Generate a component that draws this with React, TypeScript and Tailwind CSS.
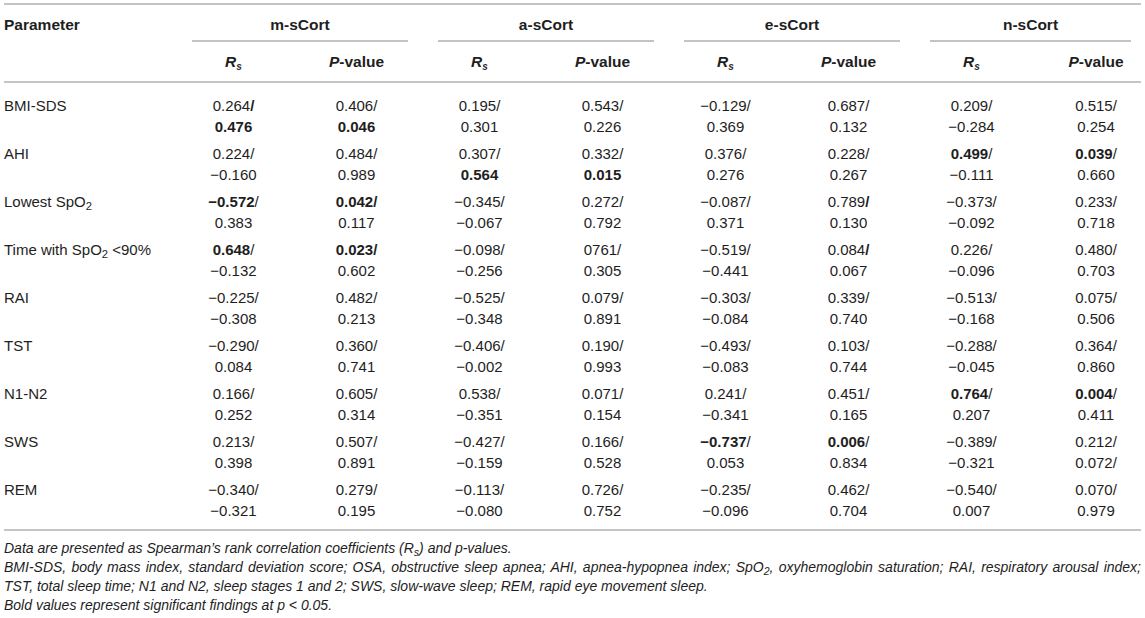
import React from 'react';

// each value: two lines, text between * is bold
type Pair = [string, string];

interface Row {
  label: React.ReactNode;
  cells: Pair[];
}

const SpO2 = () => (
  <>
    SpO<sub>2</sub>
  </>
);

const rows: Row[] = [
  {
    label: 'BMI-SDS',
    cells: [
      ['0.264*/*', '*0.476*'],
      ['0.406/', '*0.046*'],
      ['0.195/', '0.301'],
      ['0.543/', '0.226'],
      ['−0.129/', '0.369'],
      ['0.687/', '0.132'],
      ['0.209/', '−0.284'],
      ['0.515/', '0.254'],
    ],
  },
  {
    label: 'AHI',
    cells: [
      ['0.224/', '−0.160'],
      ['0.484/', '0.989'],
      ['0.307/', '*0.564*'],
      ['0.332/', '*0.015*'],
      ['0.376/', '0.276'],
      ['0.228/', '0.267'],
      ['*0.499*/', '−0.111'],
      ['*0.039*/', '0.660'],
    ],
  },
  {
    label: (
      <>
        Lowest <SpO2 />
      </>
    ),
    cells: [
      ['*−0.572*/', '0.383'],
      ['*0.042/*', '0.117'],
      ['−0.345/', '−0.067'],
      ['0.272/', '0.792'],
      ['−0.087/', '0.371'],
      ['0.789*/*', '0.130'],
      ['−0.373/', '−0.092'],
      ['0.233/', '0.718'],
    ],
  },
  {
    label: (
      <>
        Time with <SpO2 /> &lt;90%
      </>
    ),
    cells: [
      ['*0.648*/', '−0.132'],
      ['*0.023/*', '0.602'],
      ['−0.098/', '−0.256'],
      ['0761/', '0.305'],
      ['−0.519/', '−0.441'],
      ['0.084*/*', '0.067'],
      ['0.226/', '−0.096'],
      ['0.480/', '0.703'],
    ],
  },
  {
    label: 'RAI',
    cells: [
      ['−0.225/', '−0.308'],
      ['0.482/', '0.213'],
      ['−0.525/', '−0.348'],
      ['0.079/', '0.891'],
      ['−0.303/', '−0.084'],
      ['0.339/', '0.740'],
      ['−0.513/', '−0.168'],
      ['0.075/', '0.506'],
    ],
  },
  {
    label: 'TST',
    cells: [
      ['−0.290/', '0.084'],
      ['0.360/', '0.741'],
      ['−0.406/', '−0.002'],
      ['0.190/', '0.993'],
      ['−0.493/', '−0.083'],
      ['0.103/', '0.744'],
      ['−0.288/', '−0.045'],
      ['0.364/', '0.860'],
    ],
  },
  {
    label: 'N1-N2',
    cells: [
      ['0.166/', '0.252'],
      ['0.605/', '0.314'],
      ['0.538/', '−0.351'],
      ['0.071/', '0.154'],
      ['0.241/', '−0.341'],
      ['0.451/', '0.165'],
      ['*0.764*/', '0.207'],
      ['*0.004*/', '0.411'],
    ],
  },
  {
    label: 'SWS',
    cells: [
      ['0.213/', '0.398'],
      ['0.507/', '0.891'],
      ['−0.427/', '−0.159'],
      ['0.166/', '0.528'],
      ['*−0.737*/', '0.053'],
      ['*0.006*/', '0.834'],
      ['−0.389/', '−0.321'],
      ['0.212/', '0.072/'],
    ],
  },
  {
    label: 'REM',
    cells: [
      ['−0.340/', '−0.321'],
      ['0.279/', '0.195'],
      ['−0.113/', '−0.080'],
      ['0.726/', '0.752'],
      ['−0.235/', '−0.096'],
      ['0.462/', '0.704'],
      ['−0.540/', '0.007'],
      ['0.070/', '0.979'],
    ],
  },
];

const groups = ['m-sCort', 'a-sCort', 'e-sCort', 'n-sCort'];

const Rich: React.FC<{ text: string }> = ({ text }) => (
  <>
    {text.split('*').map((part, i) =>
      i % 2 ? (
        <b key={i} className="font-bold">
          {part}
        </b>
      ) : (
        <span key={i}>{part}</span>
      )
    )}
  </>
);

const Rs = () => (
  <span className="italic">
    R<sub className="text-[10px]">s</sub>
  </span>
);

const App: React.FC = () => {
  return (
    <div className="w-[1145px] h-[618px] bg-white overflow-hidden pt-[3px] px-1 font-['Liberation_Sans',Arial,sans-serif] text-[#1e1e1e]">
      {/* header */}
      <div className="grid grid-cols-[168px_123px_123px_123px_123px_123px_123px_123px_1fr] border-t-2 border-b-2 border-[#c4c4c4] text-[15.5px] leading-[20px] font-bold">
        <div className="row-span-2 pt-[10px]">Parameter</div>
        {groups.map((g) => (
          <div
            key={g}
            className="col-span-2 ml-5 mr-2.5 pt-[10px] pb-[5px] border-b-2 border-[#c4c4c4] text-center"
          >
            {g}
          </div>
        ))}
        {groups.map((g, gi) => (
          <React.Fragment key={g}>
            <div className="pt-[10px] pb-[9px] text-center">
              <Rs />
            </div>
            <div className={`pt-[10px] pb-[9px] text-center ${gi === 3 ? 'pl-[18px]' : ''}`}>
              <span className="italic">P</span>-value
            </div>
          </React.Fragment>
        ))}
      </div>

      {/* body */}
      <div className="grid grid-cols-[168px_123px_123px_123px_123px_123px_123px_123px_1fr] border-b-2 border-[#c4c4c4] text-[15px] leading-[21px]">
        {rows.map((row, ri) => {
          const pad =
            ri === 0 ? 'pt-[12px] pb-[3px]' : ri === rows.length - 1 ? 'pt-[3px] pb-[8px]' : 'pt-[3px] pb-[3px]';
          return (
            <React.Fragment key={ri}>
              <div className={`${pad} whitespace-nowrap`}>{row.label}</div>
              {row.cells.map((c, ci) => (
                <div key={ci} className={`${pad} text-center ${ci === 7 ? 'pl-[18px]' : ''}`}>
                  <div>
                    <Rich text={c[0]} />
                  </div>
                  <div>
                    <Rich text={c[1]} />
                  </div>
                </div>
              ))}
            </React.Fragment>
          );
        })}
      </div>

      {/* notes */}
      <div className="mt-[8px] text-[14px] leading-[19px] italic">
        <p>
          Data are presented as Spearman’s rank correlation coefficients (R<sub>s</sub>) and p-values.
        </p>
        <p className="text-justify [text-align-last:justify] whitespace-nowrap">
          BMI-SDS, body mass index, standard deviation score; OSA, obstructive sleep apnea; AHI, apnea-hypopnea index;
          SpO<sub>2</sub>, oxyhemoglobin saturation; RAI, respiratory arousal index;
        </p>
        <p>TST, total sleep time; N1 and N2, sleep stages 1 and 2; SWS, slow-wave sleep; REM, rapid eye movement sleep.</p>
        <p>Bold values represent significant findings at p &lt; 0.05.</p>
      </div>
    </div>
  );
};

export default App;
